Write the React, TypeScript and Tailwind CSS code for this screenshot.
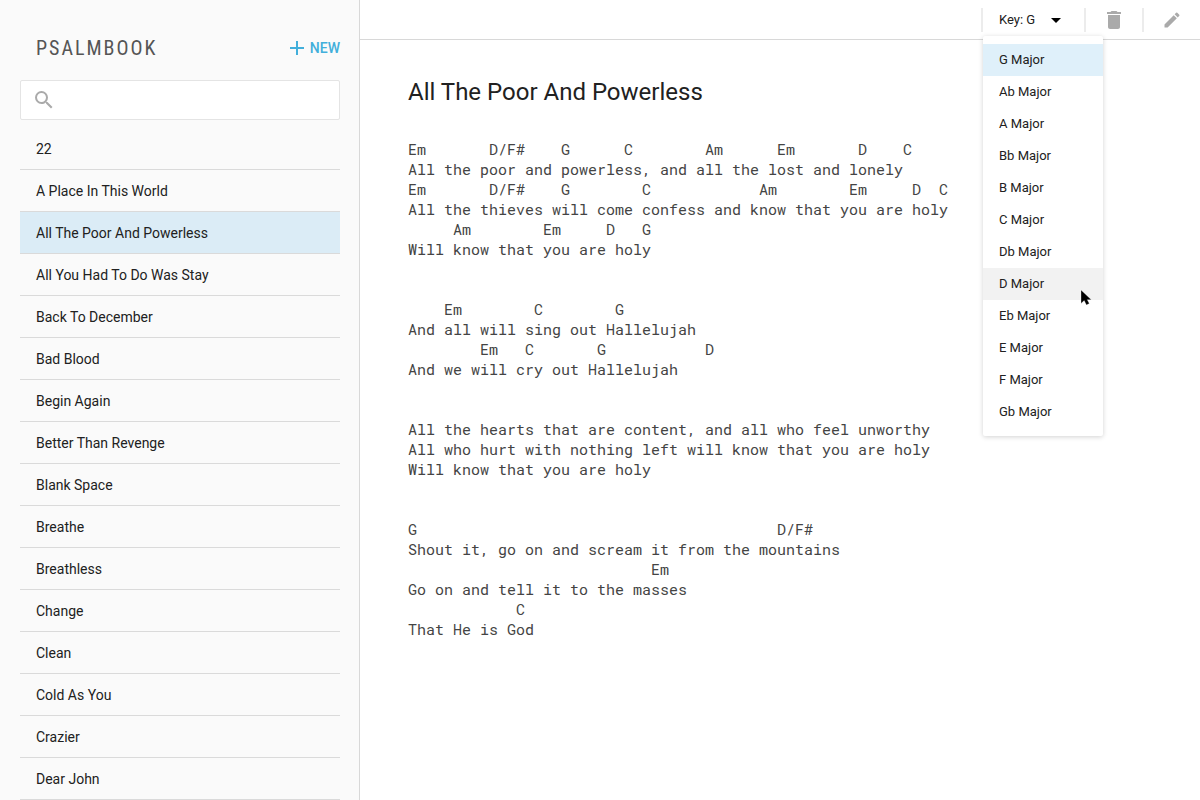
import { useState } from "react";
import { MdAdd, MdArrowDropDown, MdDelete, MdEdit, MdSearch } from "react-icons/md";

const songs = [
  "22",
  "A Place In This World",
  "All The Poor And Powerless",
  "All You Had To Do Was Stay",
  "Back To December",
  "Bad Blood",
  "Begin Again",
  "Better Than Revenge",
  "Blank Space",
  "Breathe",
  "Breathless",
  "Change",
  "Clean",
  "Cold As You",
  "Crazier",
  "Dear John",
];

const keys = ["G", "Ab", "A", "Bb", "B", "C", "Db", "D", "Eb", "E", "F", "Gb"];

const lyrics = `Em       D/F#    G      C        Am      Em       D    C
All the poor and powerless, and all the lost and lonely
Em       D/F#    G        C            Am        Em     D  C
All the thieves will come confess and know that you are holy
     Am        Em     D   G
Will know that you are holy


    Em        C        G
And all will sing out Hallelujah
        Em   C       G           D
And we will cry out Hallelujah


All the hearts that are content, and all who feel unworthy
All who hurt with nothing left will know that you are holy
Will know that you are holy


G                                        D/F#
Shout it, go on and scream it from the mountains
                           Em
Go on and tell it to the masses
            C
That He is God`;

function Cursor() {
  return (
    <svg viewBox="0 0 14 20" className="pointer-events-none absolute right-2.5 top-5 z-10 h-5 w-3.5" aria-hidden="true">
      <path d="M2 2v13.4l3.2-2.8 2.2 4.3 2.9-1.4-2-3.8h4z" fill="#000" stroke="#fff" strokeOpacity="0.5" strokeWidth="0.6" />
    </svg>
  );
}

function KeyMenu() {
  const [open, setOpen] = useState(true);
  const [current, setCurrent] = useState("G");
  return (
    <div className="relative border-l-2 border-[#ececec]">
      <button
        type="button"
        aria-haspopup="listbox"
        aria-expanded={open}
        onClick={() => setOpen(!open)}
        className="flex h-6 w-[101px] items-center justify-between px-4 text-[13px]"
      >
        Key: {current}
        <MdArrowDropDown className="size-6 text-black" />
      </button>
      {open && (
        <ul
          role="listbox"
          aria-label="Key"
          className="absolute left-0 top-7 z-10 w-[120px] rounded-xs bg-white py-2 shadow-[0_1px_5px_rgba(0,0,0,0.18)]"
        >
          {keys.map((key) => (
            <li key={key} role="option" aria-selected={key === current} className="relative">
              <button
                type="button"
                onClick={() => setCurrent(key)}
                className={
                  key === current
                    ? "block h-8 w-full bg-[#dff0fa] px-4 text-left text-[13px]"
                    : key === "D"
                      ? "block h-8 w-full bg-[#f2f2f2] px-4 text-left text-[13px]"
                      : "block h-8 w-full px-4 text-left text-[13px] hover:bg-[#f2f2f2]"
                }
              >
                {key} Major
              </button>
              {key === "D" && <Cursor />}
            </li>
          ))}
        </ul>
      )}
    </div>
  );
}

export default function App() {
  const [selected, setSelected] = useState(songs[2]);
  return (
    <div className="flex h-screen bg-white font-['Roboto',sans-serif] text-[#212121]">
      <aside className="flex w-90 shrink-0 flex-col overflow-hidden border-r border-[#d8d8d8] bg-[#fafafa] pl-5 pr-[19px]">
        <header className="flex h-20 shrink-0 items-center justify-between pl-4 pt-4">
          <h1 className="font-['Roboto_Condensed','Roboto',sans-serif] text-xl tracking-[2px] text-[#555]">PSALMBOOK</h1>
          <button type="button" className="flex items-center gap-px text-sm font-medium text-[#42afdb]">
            <MdAdd className="size-6" />
            NEW
          </button>
        </header>
        <label className="flex h-10 shrink-0 items-center gap-2 rounded-xs border border-[#e4e4e4] bg-white pl-[11px]">
          <MdSearch className="size-6 text-[#aaa]" />
          <input type="search" aria-label="Search songs" className="min-w-0 flex-1 text-sm outline-none" />
        </label>
        <nav className="pt-2">
          <ul>
            {songs.map((song) => (
              <li key={song} className="border-b border-[#dadada]">
                <a
                  href="#song"
                  onClick={() => setSelected(song)}
                  className={
                    song === selected
                      ? "flex h-[41px] items-center bg-[#dbecf6] px-4 text-sm"
                      : "flex h-[41px] items-center px-4 text-sm"
                  }
                >
                  {song}
                </a>
              </li>
            ))}
          </ul>
        </nav>
      </aside>
      <div className="flex min-w-0 flex-1 flex-col">
        <div className="flex h-10 shrink-0 items-center justify-end border-b border-[#d8d8d8]">
          <KeyMenu />
          <button type="button" aria-label="Delete song" className="flex h-6 w-[58px] items-center justify-center border-l-2 border-[#ececec] text-[#aaa]">
            <MdDelete className="size-6" />
          </button>
          <button type="button" aria-label="Edit song" className="flex h-6 w-[58px] items-center justify-center border-l-2 border-[#ececec] text-[#aaa]">
            <MdEdit className="size-5" />
          </button>
        </div>
        <main className="px-12 pt-9">
          <h2 className="text-2xl">{selected}</h2>
          <pre className="mt-[31px] font-['Roboto_Mono','Liberation_Mono',monospace] text-[15px] leading-5 text-[#444]">{lyrics}</pre>
        </main>
      </div>
    </div>
  );
}
